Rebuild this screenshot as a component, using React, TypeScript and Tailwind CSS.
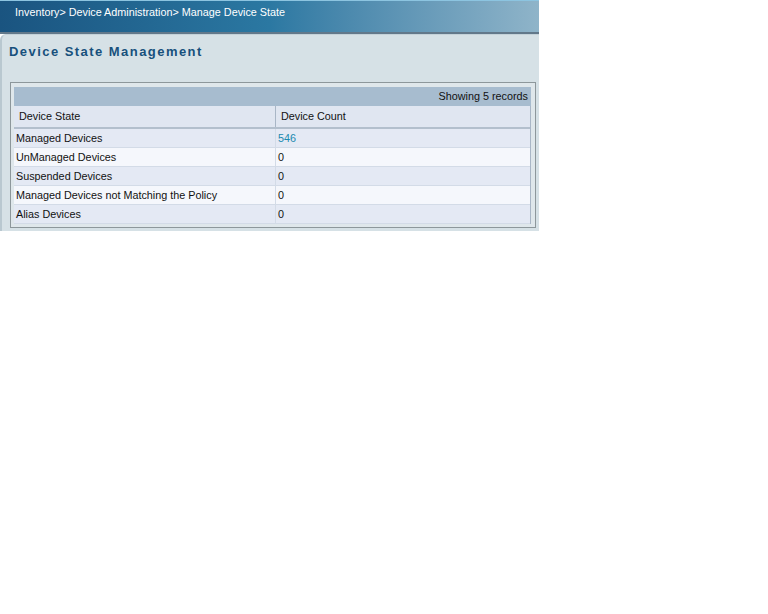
const rows = [
  { state: 'Managed Devices', count: '546', link: true },
  { state: 'UnManaged Devices', count: '0' },
  { state: 'Suspended Devices', count: '0' },
  { state: 'Managed Devices not Matching the Policy', count: '0' },
  { state: 'Alias Devices', count: '0' },
]

export default function App() {
  return (
    <div className="min-h-[614px] w-[768px] bg-white font-['Liberation_Sans',Arial,sans-serif] text-[10.8px] text-[#111]">
      <div className="w-[539px]">
        {/* Breadcrumb bar */}
        <div className="h-[34px] border-t border-t-[#8cc4e0] border-b-2 border-b-[#62788a] bg-gradient-to-r from-[#1a5480] via-[#2b78a2] to-[#8fb4c9]">
          <div className="pl-[15px] pt-[3px] text-[10.8px] text-white">
            Inventory&gt; Device Administration&gt; Manage Device State
          </div>
        </div>

        {/* Panel */}
        <div className="h-[197px] border-l-2 border-t border-l-[#b9c8d0] border-t-[#c4d2d9] rounded-tl-[6px] bg-[#d6e1e6] pl-[7px] pr-[3px] pt-[9px]">
          <h1 className="text-[13px] font-bold leading-[16px] tracking-[1.45px] text-[#17507c]">
            Device State Management
          </h1>

          <div className="mt-[22px] ml-[1px] w-[526px] border border-[#8d979b] bg-[#dfe7eb] pb-[3px] pl-[3px] pr-[4px] pt-[4px]">
            <div className="flex h-[19px] items-center justify-end bg-[#a7bccf] pr-[3px]">
              Showing 5 records
            </div>
            <div className="border-r border-[#a9b6c6]">
              <div className="flex h-[23px] items-center border-b-2 border-[#b3bfcd] bg-[#e0e6f1]">
                <div className="flex h-full w-[262px] items-center border-r border-[#a9b6c6] pl-[5px]">Device State</div>
                <div className="pl-[5px]">Device Count</div>
              </div>
              {rows.map((r, i) => (
                <div
                  key={r.state}
                  className={`flex h-[19px] items-center border-b border-[#d3dbe7] ${i % 2 === 0 ? 'bg-[#e4e9f4]' : 'bg-[#f5f7fc]'}`}
                >
                  <div className="flex h-full w-[262px] items-center border-r border-[#d3dbe7] pl-[2px]">{r.state}</div>
                  <div className={`pl-[2px] ${r.link ? 'text-[#1a8ab0]' : ''}`}>{r.count}</div>
                </div>
              ))}
            </div>
          </div>
        </div>
      </div>
    </div>
  )
}
